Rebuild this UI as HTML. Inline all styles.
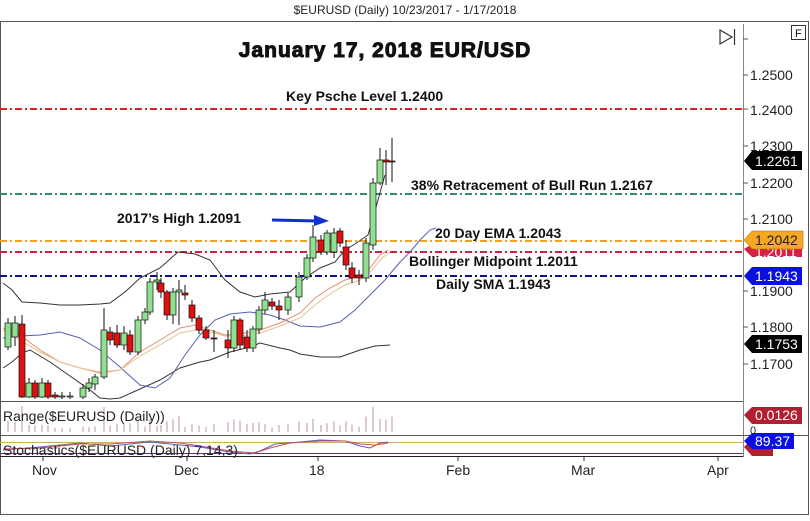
<!DOCTYPE html>
<html><head><meta charset="utf-8"><style>
html,body{margin:0;padding:0;background:#fff;}
svg text{font-family:"Liberation Sans",Arial,sans-serif;}
</style></head><body>
<svg id="s" width="810" height="516" viewBox="0 0 810 516" xmlns="http://www.w3.org/2000/svg">
<rect x="0" y="0" width="810" height="516" fill="#fff"/>
<text x="405" y="14" font-size="12" text-anchor="middle" fill="#222">$EURUSD (Daily)  10/23/2017 - 1/17/2018</text>
<rect x="0.5" y="21.5" width="808" height="493" fill="none" stroke="#555" stroke-width="1"/>
<line x1="743.5" y1="24" x2="743.5" y2="457" stroke="#888"/>
<line x1="0" y1="401.5" x2="743" y2="401.5" stroke="#555"/>
<line x1="0" y1="435.5" x2="808" y2="435.5" stroke="#555"/>
<line x1="0" y1="456.5" x2="743" y2="456.5" stroke="#222"/>
<rect x="791.5" y="25.5" width="14" height="14" fill="#fff" stroke="#333"/>
<text x="795" y="37" font-size="11" fill="#111">F</text>
<path d="M720 30 L732 37 L720 44 Z" fill="none" stroke="#333" stroke-width="1.2"/>
<line x1="734.5" y1="29" x2="734.5" y2="45" stroke="#333" stroke-width="1.2"/>

<text x="385" y="57" font-size="21" font-weight="bold" text-anchor="middle" fill="#111" letter-spacing="1" stroke="#111" stroke-width="1">January 17, 2018 EUR/USD</text>

<line x1="0" y1="109" x2="743" y2="109" stroke="#d22" stroke-width="2" stroke-dasharray="7,3,2,3"/>
<line x1="0" y1="194" x2="743" y2="194" stroke="#3a8a70" stroke-width="2" stroke-dasharray="7,3,2,3"/>
<line x1="0" y1="241" x2="743" y2="241" stroke="#f2a020" stroke-width="2" stroke-dasharray="7,3,2,3"/>
<line x1="0" y1="252" x2="743" y2="252" stroke="#d2203a" stroke-width="2" stroke-dasharray="7,3,2,3"/>
<line x1="0" y1="276" x2="743" y2="276" stroke="#101090" stroke-width="2" stroke-dasharray="7,3,2,3"/>

<polyline fill="none" stroke="#333" stroke-width="1" points="3,283 12,290 22,302 40,303 60,305 80,305 100,304 110,303 125,292 140,278 160,268 178,252 195,254 210,260 225,280 240,292 255,297 270,294 290,292 305,278 320,268 335,262 345,250 355,244 368,235 378,200 385,175"/>
<polyline fill="none" stroke="#333" stroke-width="1" points="3,368 12,362 22,353 30,350 50,362 70,376 90,390 100,398 110,399 120,398 140,389 160,380 180,368 200,362 210,360 230,352 250,347 260,343 280,348 290,350 300,354 320,357 340,357 360,350 375,346 390,345"/>
<polyline fill="none" stroke="#5560b0" stroke-width="1" points="3,338 20,336 40,335 60,332 80,338 100,350 120,367 140,385 155,388 170,378 185,355 200,335 215,320 230,314 250,312 270,315 285,320 300,326 320,327 340,322 355,310 370,295 385,280 400,262 410,252 420,240 430,230 436,228"/>
<polyline fill="none" stroke="#e39070" stroke-width="1" points="3,328 20,335 40,350 60,362 80,368 100,373 120,370 140,352 160,340 180,328 195,325 210,330 225,335 240,334 260,330 280,323 300,313 315,298 330,288 345,280 360,276 370,268 380,255 388,250"/>
<polyline fill="none" stroke="#e8c090" stroke-width="1" points="3,330 20,340 40,352 60,362 80,368 100,372 120,370 140,356 160,345 180,333 195,330 210,332 225,336 240,336 260,333 280,326 300,318 315,305 330,294 345,285 360,280 372,270 382,258 390,252"/>

<g id="candles"></g>

<g font-size="14" font-weight="bold" fill="#111">
<text x="286" y="101">Key Psche Level 1.2400</text>
<text x="411" y="190">38% Retracement of Bull Run 1.2167</text>
<text x="117" y="223">2017’s High 1.2091</text>
<text x="435" y="238">20 Day EMA 1.2043</text>
<text x="409" y="266">Bollinger Midpoint 1.2011</text>
<text x="436" y="289">Daily SMA 1.1943</text>
</g>
<line x1="272" y1="220" x2="318" y2="221" stroke="#1030d0" stroke-width="3"/>
<path d="M314 215 L329 221 L314 226 Z" fill="#1030d0"/>

<g font-size="14" fill="#222">
<line x1="743" y1="39" x2="748" y2="39" stroke="#555"/>
<line x1="743" y1="75" x2="748" y2="75" stroke="#555"/><text x="750" y="80">1.2500</text>
<line x1="743" y1="109" x2="748" y2="109" stroke="#555"/><text x="750" y="115">1.2400</text>
<line x1="743" y1="146" x2="748" y2="146" stroke="#555"/><text x="750" y="151">1.2300</text>
<line x1="743" y1="183" x2="748" y2="183" stroke="#555"/><text x="750" y="188">1.2200</text>
<line x1="743" y1="219" x2="748" y2="219" stroke="#555"/><text x="750" y="224">1.2100</text>
<line x1="743" y1="291" x2="748" y2="291" stroke="#555"/><text x="750" y="296">1.1900</text>
<line x1="743" y1="327" x2="748" y2="327" stroke="#555"/><text x="750" y="332">1.1800</text>
<line x1="743" y1="364" x2="748" y2="364" stroke="#555"/><text x="750" y="369">1.1700</text>
</g>
<g font-size="14">
<path d="M744 161 L752 151 L802 151 L802 170 L752 170 Z" fill="#000"/><text x="755" y="166" fill="#fff">1.2261</text>
<path d="M744 249 L752 244 L802 244 L802 257 L752 257 Z" fill="#d82040"/><text x="755" y="257" fill="#fff">1.2011</text>
<path d="M744 240 L752 231 L803 231 L803 249 L752 249 Z" fill="#f5a820" stroke="#a06000" stroke-width="0.5"/><text x="755" y="245" fill="#222">1.2042</text>
<path d="M744 276 L752 267 L802 267 L802 285 L752 285 Z" fill="#0a10e0"/><text x="755" y="281" fill="#fff">1.1943</text>
<path d="M744 344 L752 335 L802 335 L802 353 L752 353 Z" fill="#000"/><text x="755" y="349" fill="#fff">1.1753</text>
<path d="M744 415 L752 407 L802 407 L802 424 L752 424 Z" fill="#b02030"/><text x="755" y="420" fill="#fff">0.0126</text>
<path d="M744 447 L752 439 L773 439 L773 456 L752 456 Z" fill="#b02030"/>
<path d="M744 441 L752 433 L794 433 L794 449 L752 449 Z" fill="#0a10e0"/><text x="755" y="446" fill="#fff">89.37</text>
</g>
<text x="750" y="434" font-size="11" fill="#222">0</text>

<g id="range" stroke="#c090a0" stroke-width="1"></g>
<text x="3" y="421" font-size="14" fill="#222">Range($EURUSD (Daily))</text>
<line x1="0" y1="442.5" x2="743" y2="442.5" stroke="#c8b060"/>
<line x1="0" y1="453.5" x2="743" y2="453.5" stroke="#603080"/>
<polyline fill="none" stroke="#5560c0" stroke-width="1" points="3,450 40,447 80,443 110,446 150,442 180,445 200,447 230,452 250,454 260,451 275,444 300,442 320,440 345,441 360,446 370,448 380,443 388,442"/>
<polyline fill="none" stroke="#d05050" stroke-width="1" points="3,449 40,448 80,444 110,444 150,441 180,443 200,446 230,451 255,453 270,448 290,443 320,441 345,441 360,444 375,445 388,443"/>
<text x="3" y="455" font-size="14" fill="#222">Stochastics($EURUSD (Daily) 7,14,3)</text>
<g font-size="14" fill="#222">
<line x1="43" y1="457" x2="43" y2="461" stroke="#333"/><text x="32" y="475">Nov</text>
<line x1="187" y1="457" x2="187" y2="461" stroke="#333"/><text x="174" y="475">Dec</text>
<line x1="318" y1="457" x2="318" y2="461" stroke="#333"/><text x="309" y="475">18</text>
<line x1="458" y1="457" x2="458" y2="461" stroke="#333"/><text x="446" y="475">Feb</text>
<line x1="584" y1="457" x2="584" y2="461" stroke="#333"/><text x="571" y="475">Mar</text>
<line x1="718" y1="457" x2="718" y2="461" stroke="#333"/><text x="707" y="475">Apr</text>
</g>
</svg>
<script>
var C=[[8,347,323,318,350],[15,337,323,316,346],[22,324,397,315,398],[29,397,383,378,398],[35,383,397,380,399],[42,397,383,378,398],[48,383,397,380,399],[55,395,397,392,399],[62,397,396,392,399],[70,397,396,392,399],[83,397,388,384,399],[89,388,383,378,392],[95,384,377,374,390],[104,377,330,308,379],[110,332,340,327,345],[117,333,345,325,348],[124,345,333,326,350],[130,335,352,330,355],[138,352,320,316,355],[145,320,312,308,324],[150,312,282,278,315],[157,282,280,272,290],[161,283,292,278,298],[167,292,315,290,320],[173,315,292,288,324],[179,292,290,280,325],[185,293,295,285,300],[192,305,318,300,322],[199,318,330,315,334],[206,330,338,326,340],[214,338,338,330,352],[228,340,348,330,358],[234,348,320,316,352],[240,320,345,318,350],[247,337,348,330,352],[253,348,329,326,352],[259,329,310,306,334],[265,310,300,292,314],[272,302,306,298,310],[279,306,310,300,320],[288,310,297,293,315],[299,297,277,272,302],[307,277,258,254,280],[313,258,237,225,262],[321,240,252,235,255],[327,252,233,230,255],[334,252,233,228,258],[340,231,243,228,247],[346,247,265,240,270],[352,268,278,262,283],[359,275,278,270,285],[366,278,243,238,282],[373,245,183,178,250],[380,183,160,148,185],[386,160,162,150,185],[392,161,161,138,182]];
var g=document.getElementById('candles'),h='';
C.forEach(function(c){var x=c[0],o=c[1],cl=c[2],t=Math.min(o,cl),b=Math.max(o,cl);
h+='<line x1="'+x+'" y1="'+c[3]+'" x2="'+x+'" y2="'+c[4]+'" stroke="#111"/>';
var up=cl<o;h+='<rect x="'+(x-3)+'" y="'+t+'" width="6" height="'+Math.max(1,b-t)+'" fill="'+(up?'#90e090':'#e01010')+'" stroke="#111" stroke-width="0.7"/>';});
g.innerHTML=h;
var r=document.getElementById('range'),s='';
C.forEach(function(c,i){var v=Math.min(26,Math.max(4,(c[4]-c[3])*0.35));s+='<line x1="'+c[0]+'" y1="'+(432-v)+'" x2="'+c[0]+'" y2="432"/>';});
r.innerHTML=s;
</script>
</body></html>
